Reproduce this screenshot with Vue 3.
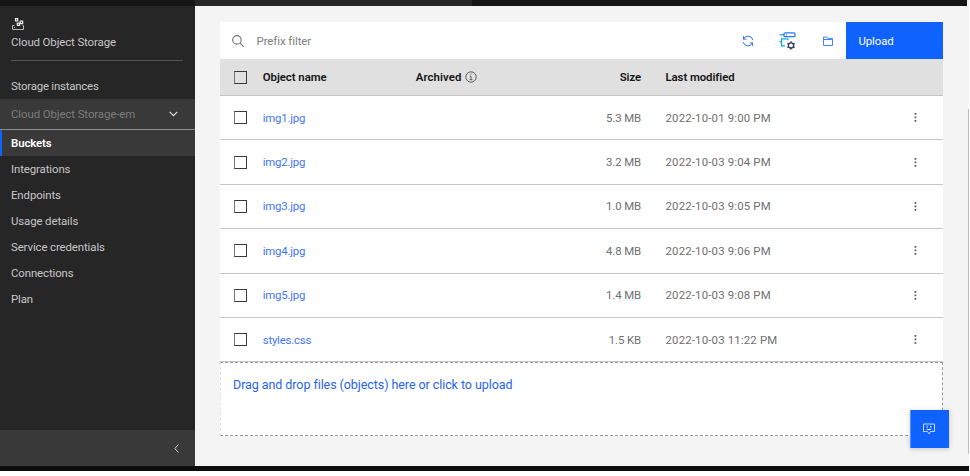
<script setup>
const links = ['Integrations', 'Endpoints', 'Usage details', 'Service credentials', 'Connections', 'Plan']
const objects = [
  { name: 'img1.jpg', size: '5.3 MB', modified: '2022-10-01 9:00 PM' },
  { name: 'img2.jpg', size: '3.2 MB', modified: '2022-10-03 9:04 PM' },
  { name: 'img3.jpg', size: '1.0 MB', modified: '2022-10-03 9:05 PM' },
  { name: 'img4.jpg', size: '4.8 MB', modified: '2022-10-03 9:06 PM' },
  { name: 'img5.jpg', size: '1.4 MB', modified: '2022-10-03 9:08 PM' },
  { name: 'styles.css', size: '1.5 KB', modified: '2022-10-03 11:22 PM' },
]
</script>

<template>
  <div class="screen">
    <header class="topbar"><span class="top-active"></span></header>
    <div class="body">
      <nav class="sidebar">
        <div class="product">
          <svg class="product-icon" viewBox="0 0 12 12" fill="none" stroke="#e8e8e8">
            <path d="M3.5.7h2.2v2.2H3.5zM8.3 3.2h2.4v2.4H8.3zM5.3 5.2h2.2v2.2H5.3z" stroke-width="1.2" />
            <path d="M2.5 7.5h-2v4h11v-4h-1M2 9.5h1" stroke="#b8b8b8" />
          </svg>
          <span class="product-name">Cloud Object Storage</span>
        </div>
        <a class="instances">Storage instances</a>
        <div class="instance">
          <span>Cloud Object Storage-em</span>
          <svg width="9" height="6" viewBox="0 0 9 6" fill="none" stroke="#e0e0e0" stroke-width="1.2"><path d="M.7.9 4.5 4.7 8.3.9" /></svg>
        </div>
        <a class="link current">Buckets</a>
        <a v-for="link in links" :key="link" class="link">{{ link }}</a>
        <div class="collapse">
          <svg width="5" height="9" viewBox="0 0 5 9" fill="none" stroke="#d0d0d0"><path d="M4.4.6.8 4.5l3.6 3.9" /></svg>
        </div>
      </nav>

      <main class="main">
        <div class="toolbar">
          <svg class="search" viewBox="0 0 11 11" fill="none" stroke="#6f6f6f"><circle cx="4.5" cy="4.5" r="3.9" /><path d="m7.4 7.4 3.2 3.2" /></svg>
          <span class="placeholder">Prefix filter</span>
          <svg class="refresh" viewBox="0 0 12 12" fill="none" stroke="#2f73ff">
            <path d="M1.5 4.3V1.2M1.3 4.1h3M1.5 4A5 5 0 0 1 10.9 5M10.5 7.7v3.1M10.7 7.9h-3M10.5 8A5 5 0 0 1 1.1 7" />
          </svg>
          <svg class="configure" viewBox="0 0 17 18" fill="none">
            <path d="M.5 2.8H5" stroke="#12a3dd" stroke-width="1.2" />
            <rect x="5" y=".9" width="11" height="3.8" rx="1.2" stroke="#2478f5" stroke-width="1.3" />
            <path d="M7 2.8h1.2" stroke="#2478f5" />
            <path d="M9 6.8H2.6v7.1H6M.5 9.9h2M9 6.8v1.4" stroke="#10afd2" stroke-width="1.3" />
            <circle cx="12" cy="13.4" r="2.6" stroke="#30345f" stroke-width="1.3" />
            <path d="M12 9.2v1.6M12 16v1.6M8.4 11.3l1.4.8M14.2 14.7l1.4.8M8.4 15.5l1.4-.8M14.2 12.1l1.4-.8" stroke="#30345f" stroke-width="1.4" />
          </svg>
          <svg class="folder" viewBox="0 0 10 10" fill="none" stroke="#2f73ff"><path d="M.5 9.5v-6h9v6zM.5 3.5v-2.5h3l1.5 1.3h4.5v1.2" stroke-width=".9" /></svg>
          <button class="upload">Upload</button>
        </div>

        <div class="row head">
          <span class="check"></span>
          <span class="name">Object name</span>
          <span class="archived">Archived
            <svg width="12" height="12" viewBox="0 0 12 12" fill="none" stroke="#525252"><circle cx="6" cy="6" r="5.2" stroke-width=".9" /><path d="M4.8 5.2H6v3.5M4.5 8.7h3M5.5 3h1" stroke-width=".9" /></svg>
          </span>
          <span class="size">Size</span>
          <span class="modified">Last modified</span>
        </div>
        <div v-for="item in objects" :key="item.name" class="row">
          <span class="check"></span>
          <a class="name">{{ item.name }}</a>
          <span class="archived"></span>
          <span class="size">{{ item.size }}</span>
          <span class="modified">{{ item.modified }}</span>
          <svg class="more" width="3" height="9" viewBox="0 0 3 9" fill="#555"><path d="M.6 0h1.7v1.7H.6zM.6 3.5h1.7v1.7H.6zM.6 7h1.7v1.7H.6z" /></svg>
        </div>
        <div class="drop"><span>Drag and drop files (objects) here or click to upload</span></div>
      </main>
    </div>
    <footer class="bottombar"></footer>
    <span class="scroll-thumb"></span>
    <button class="chat">
      <svg width="12" height="12" viewBox="0 0 12 12" fill="none" stroke="#c6daff">
        <path d="M.5 1v7.5h4L6 10.9l1.5-2.4h4V1z" /><path d="M4.2 2.7v1.8M7.8 2.7v1.8M3.8 6.2q2.2 1 4.4 0" stroke="#fff" />
      </svg>
    </button>
  </div>
</template>

<style>
body { background: #fff; overflow: hidden; }
</style>

<style scoped>
.screen { position: relative; width: 969px; height: 471px; display: flex; flex-direction: column; background: #f4f4f4; font-family: Roboto, "Liberation Sans", sans-serif; font-size: 11.4px; letter-spacing: 0; line-height: 16px; white-space: nowrap; }
.screen * { box-sizing: border-box; }
svg { display: block; flex: none; }
button { border: 0; font: inherit; letter-spacing: inherit; }
.topbar { height: 6px; width: 967px; flex: none; background: #161616; padding-left: 195px; }
.top-active { display: block; width: 277px; height: 6px; background: #262626; }
.body { display: flex; height: 460px; flex: none; }
.sidebar { width: 195px; background: #262626; color: #c6c6c6; display: flex; flex-direction: column; letter-spacing: -.1px; }
.product { height: 55px; margin: 0 12px 0 11px; padding-top: 12px; border-bottom: 1px solid #525252; display: flex; flex-direction: column; gap: 4px; }
.product-icon { width: 12px; height: 12px; margin-left: 1px; }
.instances { padding: 17px 11px 0; height: 38px; letter-spacing: -.2px; }
.instance { height: 31px; background: #393939; border-bottom: 1px solid #8d8d8d; color: #7c7c7c; padding: 0 17px 0 11px; display: flex; align-items: center; justify-content: space-between; letter-spacing: -.08px; }
.link { height: 26px; padding: 5px 11px; }
.link.current { background: #393939; border-left: 2px solid #0f62fe; padding-left: 9px; color: #fff; font-weight: 600; }
.collapse { margin-top: auto; height: 36px; background: #393939; display: flex; align-items: center; justify-content: flex-end; padding-right: 16px; }
.main { width: 723px; margin: 16px 0 0 25px; }
.toolbar { display: flex; align-items: center; height: 37px; background: #fff; padding-left: 12px; }
.search { width: 12px; height: 12px; }
.placeholder { color: #7d7d7d; margin-left: 12.5px; width: 485.5px; letter-spacing: -.05px; }
.refresh { width: 12px; height: 12px; }
.configure { width: 17px; height: 18px; margin-left: 25px; }
.folder { width: 10px; height: 10px; margin-left: 27px; }
.upload { width: 97px; height: 37px; margin-left: auto; padding: 0 12.5px; text-align: left; background: #0f62fe; color: #fff; letter-spacing: -.1px; }
.row { display: grid; grid-template-columns: 29px 153px 130px 95px 223px 1fr; align-items: center; height: 44.4px; padding-left: 14px; background: #fff; border-bottom: 1px solid #c6c6c6; color: #6f6f6f; }
.head { height: 37px; background: #e0e0e0; color: #161616; font-weight: 600; }
.check { width: 13px; height: 13px; border: 1px solid #393939; border-left-color: #777; }
.name { color: #3f76f5; letter-spacing: -.2px; }
.name, .head .archived { position: relative; left: -.3px; }
.head .name { color: inherit; letter-spacing: -.04px; }
.archived { display: flex; align-items: center; gap: 3px; }
.size { text-align: right; letter-spacing: -.1px; }
.modified { padding-left: 24.5px; letter-spacing: .17px; }
.head .modified { letter-spacing: -.08px; }
.more { justify-self: start; margin-left: 49.5px; }
.head .archived { letter-spacing: .1px; }
.drop { height: 74px; border: 1px dashed #999; border-left-color: #e0e0e0; background: #fff; color: #1f64f0; padding: 13.5px 12px; font-size: 12.5px; letter-spacing: -.07px; }
.bottombar { height: 5px; background: #0c0c0c; }
.scroll-thumb { position: absolute; left: 968px; top: 109px; width: 1px; height: 345px; background: #bcbcbc; }
.chat { position: absolute; left: 910px; top: 410px; width: 39px; height: 38px; background: #0f62fe; border-left: 1px solid #5590ff; box-shadow: 0 1px 5px rgba(0,0,0,.2); display: flex; align-items: center; justify-content: center; padding: 0 2px 0 0; }
</style>
